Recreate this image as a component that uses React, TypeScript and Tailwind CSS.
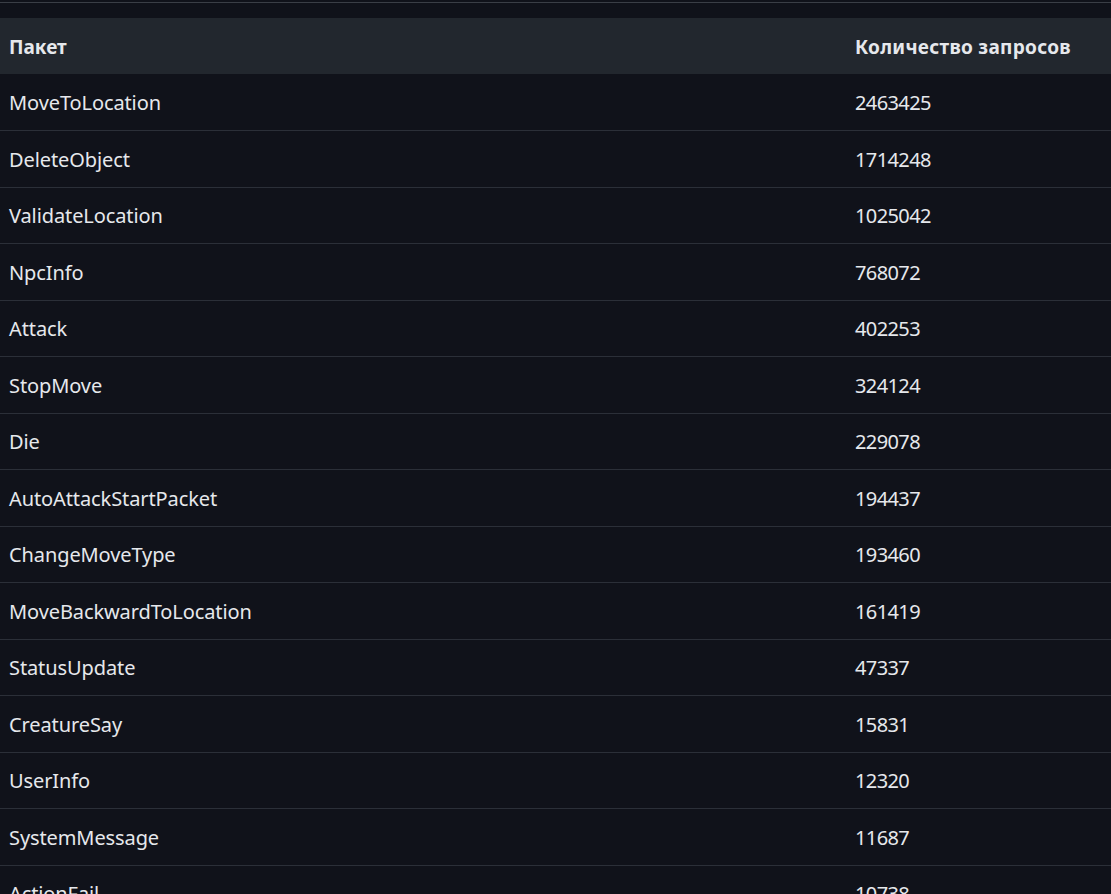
const rows: [string, number][] = [
  ["MoveToLocation", 2463425],
  ["DeleteObject", 1714248],
  ["ValidateLocation", 1025042],
  ["NpcInfo", 768072],
  ["Attack", 402253],
  ["StopMove", 324124],
  ["Die", 229078],
  ["AutoAttackStartPacket", 194437],
  ["ChangeMoveType", 193460],
  ["MoveBackwardToLocation", 161419],
  ["StatusUpdate", 47337],
  ["CreatureSay", 15831],
  ["UserInfo", 12320],
  ["SystemMessage", 11687],
  ["ActionFail", 10738],
  ["MagicSkillUse", 9912],
];

export default function App() {
  return (
    <div className="h-[894px] overflow-hidden bg-[#10121a] text-[#e6e8ec] font-['Noto_Sans',sans-serif]">
      <div className="h-[2px] bg-[#10121a]" />
      <div className="h-px bg-[#3a3e46]" />
      <div className="h-[15px]" />
      <table className="w-full border-collapse">
        <thead>
          <tr className="h-[56px] bg-[#22272e] text-left">
            <th className="pl-[9px] pt-[2px] text-[19px] font-bold">Пакет</th>
            <th className="w-[256px] pt-[2px] text-[19px] font-bold tracking-[0.3px]">Количество запросов</th>
          </tr>
        </thead>
        <tbody>
          {rows.map(([name, n]) => (
            <tr key={name} className="h-[56.5px] border-b border-[#2b2f38] text-[20px]">
              <td className="pl-[9px] pt-[2px] tracking-[-0.1px]">{name}</td>
              <td className="pt-[2px] tracking-[-0.6px]">{n}</td>
            </tr>
          ))}
        </tbody>
      </table>
    </div>
  );
}
